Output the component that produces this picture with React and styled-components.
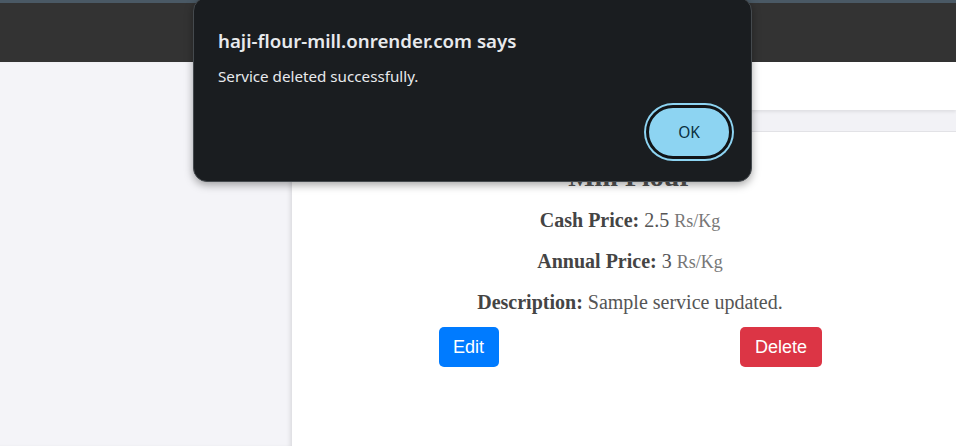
import React from "react";
import styled, { createGlobalStyle } from "styled-components";

const Global = createGlobalStyle`
  html, body { margin: 0; padding: 0; }
  body { width: 956px; height: 446px; overflow: hidden; background: #fff; font-family: "Liberation Serif", serif; }
  #root { height: 446px; }
`;

const Page = styled.div`
  position: relative;
  height: 446px;
  display: flex;
  flex-direction: column;
`;

const TopStrip = styled.div`
  height: 3px;
  background: #4a5965;
  flex: none;
`;

const NavBar = styled.div`
  height: 59px;
  background: #333333;
  flex: none;
`;

const Body = styled.div`
  flex: 1;
  display: flex;
  min-height: 0;
`;

const Sidebar = styled.aside`
  width: 292px;
  flex: none;
  background: #f4f4f8;
  box-shadow: inset -4px 0 4px -2px rgba(0, 0, 0, 0.1);
`;

const Main = styled.main`
  flex: 1;
  display: flex;
  flex-direction: column;
  background: #f2f2f6;
  min-width: 0;
`;

const Header = styled.div`
  height: 48px;
  background: #ffffff;
  box-shadow: 0 2px 3px rgba(0, 0, 0, 0.08);
  flex: none;
`;

const Card = styled.section`
  flex: 1;
  margin-top: 21px;
  background: #ffffff;
  border-top: 1px solid #e2e2e6;
  display: flex;
  flex-direction: column;
  align-items: center;
  padding: 29px 0 0 12px;
  color: #555;
`;

const Title = styled.h2`
  margin: 0 0 16px;
  font-family: "Liberation Serif", serif;
  font-size: 28px;
  line-height: 32px;
  font-weight: 700;
  color: #555;
`;

const Line = styled.p`
  margin: 0 0 17px;
  font-size: 20px;
  line-height: 23px;
  color: #555;
  &:last-of-type { margin-bottom: 13px; }
  b { color: #444; }
`;

const Unit = styled.span`
  font-size: 18px;
  color: #777;
`;

const Actions = styled.div`
  width: 383px;
  display: flex;
  justify-content: space-between;
`;

const ActionButton = styled.button`
  height: 40px;
  padding: 0 14.5px;
  border: none;
  border-radius: 5px;
  font-family: "Liberation Sans", Arial, sans-serif;
  font-size: 18px;
  color: #fff;
  background: ${(p) => (p.$danger ? "#dc3545" : "#007bff")};
`;

const Dialog = styled.div`
  position: absolute;
  left: 193px;
  top: -3px;
  width: 559px;
  height: 185px;
  box-sizing: border-box;
  background: #1a1d20;
  border: 1px solid #454a4e;
  border-radius: 14px;
  box-shadow: 0 3px 8px rgba(0, 0, 0, 0.35);
  padding: 31px 19px 0 24px;
  display: flex;
  flex-direction: column;
  font-family: "Noto Sans", "Open Sans", sans-serif;
`;

const DialogTitle = styled.div`
  font-size: 18.7px;
  font-weight: 600;
  line-height: 24px;
  color: #e8eaed;
`;

const DialogMessage = styled.div`
  margin-top: 13px;
  font-size: 15.2px;
  line-height: 20px;
  color: #e8eaed;
`;

const DialogFooter = styled.div`
  margin-top: 19px;
  display: flex;
  justify-content: flex-end;
`;

const OkButton = styled.button`
  width: 86px;
  height: 54px;
  box-sizing: border-box;
  border-radius: 27px;
  background: #8dd4f2;
  border: 3px solid #111417;
  box-shadow: 0 0 0 2px #8dd4f2;
  font-family: "Noto Sans", "Open Sans", sans-serif;
  font-size: 15.5px;
  color: #0a2f40;
  padding: 0;
`;

export default function App() {
  return (
    <>
      <Global />
      <Page>
        <TopStrip />
        <NavBar />
        <Body>
          <Sidebar />
          <Main>
            <Header />
            <Card>
              <Title>Mill Flour</Title>
              <Line>
                <b>Cash Price:</b> 2.5 <Unit>Rs/Kg</Unit>
              </Line>
              <Line>
                <b>Annual Price:</b> 3 <Unit>Rs/Kg</Unit>
              </Line>
              <Line>
                <b>Description:</b> Sample service updated.
              </Line>
              <Actions>
                <ActionButton>Edit</ActionButton>
                <ActionButton $danger>Delete</ActionButton>
              </Actions>
            </Card>
          </Main>
        </Body>
        <Dialog>
          <DialogTitle>haji-flour-mill.onrender.com says</DialogTitle>
          <DialogMessage>Service deleted successfully.</DialogMessage>
          <DialogFooter>
            <OkButton>OK</OkButton>
          </DialogFooter>
        </Dialog>
      </Page>
    </>
  );
}
